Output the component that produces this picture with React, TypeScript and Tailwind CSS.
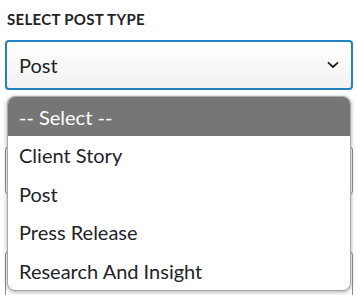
import React from 'react';

const options = ['Client Story', 'Post', 'Press Release', 'Research And Insight'];

const ChevronDown = () => (
  <svg width="12" height="8" viewBox="0 0 12 8" fill="none">
    <path d="M1.5 1.8 L6 6 L10.5 1.8" stroke="#222" strokeWidth="1.8" strokeLinecap="round" strokeLinejoin="round" />
  </svg>
);

export default function App() {
  return (
    <div
      className="relative w-[358px] h-[295px] overflow-hidden bg-white"
      style={{ fontFamily: 'Lato, "Open Sans", sans-serif' }}
    >
      <div className="flex flex-col px-[5px] pt-[8px]">
        <p className="pl-[2px] text-[15px] font-bold text-[#1d2327] leading-[22px] tracking-[0.3px]">
          SELECT POST TYPE
        </p>
        <div className="mt-[10px] h-[50px] flex items-center justify-between rounded-[4px] border-2 border-[#2381c2] bg-gradient-to-b from-white to-[#f1f1f1] pl-[12px] pr-[12px]">
          <span className="text-[20px] text-[#1d2327]">Post</span>
          <ChevronDown />
        </div>

        {/* fields behind the open menu, only their edges peek out */}
        <div className="mt-[24px] h-[20px] pl-[2px] flex items-center">
          <div className="w-[6px] h-[8px] rounded-[1px] bg-[#6b4a2b]" />
        </div>
        <div className="mt-[12px] h-[49px] rounded-[4px] border border-[#8c8f94] bg-white" />
        <div className="mt-[24px] h-[20px] pl-[2px] flex items-center">
          <div className="w-[6px] h-[8px] rounded-[1px] bg-[#6b4a2b]" />
        </div>
        <div className="mt-[12px] h-[49px] rounded-[4px] border border-[#8c8f94] bg-white" />
      </div>

      <div className="absolute left-[7px] top-[96px] w-[344px] rounded-[8px] overflow-hidden bg-white border border-[#a8a8a8] shadow-[0_1px_4px_rgba(0,0,0,0.35)]">
        <div className="h-[39px] flex items-center bg-[#767676] pl-[11px] text-[20px] text-white">
          -- Select --
        </div>
        {options.map((o) => (
          <div key={o} className="h-[38.6px] flex items-center pl-[11px] text-[20px] text-[#1d2327]">
            {o}
          </div>
        ))}
      </div>
    </div>
  );
}
